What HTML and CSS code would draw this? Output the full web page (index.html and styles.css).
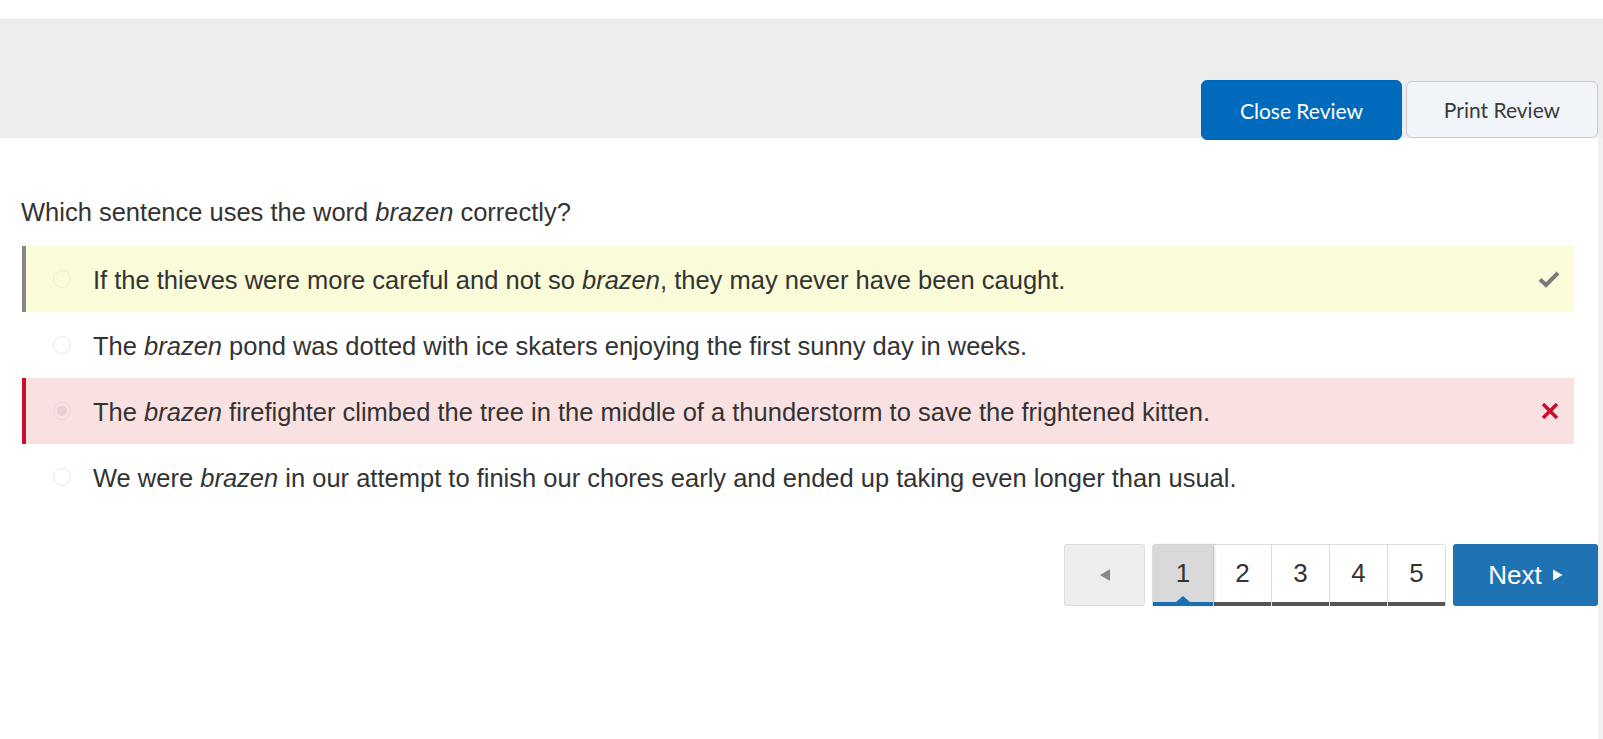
FILE: index.html
```html
<!DOCTYPE html>
<html>
<head>
<meta charset="utf-8">
<link rel="stylesheet" href="styles.css">
</head>
<body>
<div class="topgap"></div>
<header class="review-bar">
  <button class="btn btn-close">Close Review</button>
  <button class="btn btn-print">Print Review</button>
</header>
<main class="content">
  <p class="question">Which sentence uses the word <em>brazen</em> correctly?</p>
  <ul class="answers">
    <li class="answer correct">
      <span class="radio"></span>
      <span class="text">If the thieves were more careful and not so <em>brazen</em>, they may never have been caught.</span>
      <svg class="mark" width="22" height="18" viewBox="0 0 22 18"><path d="M2 9.5 L8 15 L20 3" fill="none" stroke="#7a7a7a" stroke-width="4" stroke-linejoin="miter"/></svg>
    </li>
    <li class="answer">
      <span class="radio"></span>
      <span class="text">The <em>brazen</em> pond was dotted with ice skaters enjoying the first sunny day in weeks.</span>
    </li>
    <li class="answer wrong">
      <span class="radio selected"></span>
      <span class="text">The <em>brazen</em> firefighter climbed the tree in the middle of a thunderstorm to save the frightened kitten.</span>
      <svg class="mark" width="20" height="20" viewBox="0 0 20 20"><path d="M3 3 L17 17 M17 3 L3 17" fill="none" stroke="#c8102e" stroke-width="3.6"/></svg>
    </li>
    <li class="answer">
      <span class="radio"></span>
      <span class="text">We were <em>brazen</em> in our attempt to finish our chores early and ended up taking even longer than usual.</span>
    </li>
  </ul>
  <nav class="pager">
    <button class="prev"><svg width="12" height="14" viewBox="0 0 12 14"><path d="M11 1 L1 7 L11 13 Z" fill="#8a8a8a"/></svg></button>
    <div class="pages">
      <span class="page current">1</span>
      <span class="page">2</span>
      <span class="page">3</span>
      <span class="page">4</span>
      <span class="page">5</span>
    </div>
    <button class="next">Next <svg width="11" height="12" viewBox="0 0 11 12"><path d="M1 0.5 L10.5 6 L1 11.5 Z" fill="#fff"/></svg></button>
  </nav>
</main>
</body>
</html>
```
FILE: styles.css
```css
html, body {
  margin: 0;
  padding: 0;
  background: #ffffff;
}
body {
  font-family: "Liberation Sans", Arial, sans-serif;
  color: #333333;
  width: 1603px;
  height: 739px;
  overflow: hidden;
}
.topgap {
  height: 19px;
}
.review-bar {
  height: 119px;
  background: #ededed;
  border-top: 1px solid #e6e6e6;
  box-sizing: border-box;
  display: flex;
  justify-content: flex-end;
  align-items: flex-end;
  padding-right: 5px;
  gap: 4px;
}
.btn {
  font-family: Lato, "Open Sans", sans-serif;
  font-size: 21px;
  border-radius: 6px;
  cursor: pointer;
}
.btn-close {
  width: 201px;
  height: 60px;
  margin-bottom: -2px;
  background: #006bbd;
  color: #ffffff;
  border: 1px solid #0066b3;
}
.btn-print {
  width: 192px;
  height: 57px;
  background: #f1f4f8;
  color: #3a3a3a;
  border: 1px solid #c5c9ce;
}
.content {
  height: 601px;
  box-sizing: border-box;
  border-right: 5px solid #f0f0f0;
  padding: 59px 24px 0 21px;
  width: 1603px;
}
.question {
  margin: 0;
  font-size: 25.5px;
  line-height: 30px;
}
em {
  font-style: italic;
}
.answers {
  list-style: none;
  margin: 19px 0 0 1px;
  padding: 0;
}
.answer {
  display: flex;
  align-items: center;
  height: 66px;
  border-left: 4px solid transparent;
  padding-left: 27px;
  font-size: 25.5px;
}
.answer.correct {
  background: #fafbd8;
  border-left-color: #868686;
}
.answer.wrong {
  background: #fae1e1;
  border-left-color: #c8102e;
}
.radio {
  width: 18px;
  height: 18px;
  border-radius: 50%;
  border: 1px solid #e6e6e4;
  box-sizing: border-box;
  flex: none;
  display: flex;
  align-items: center;
  justify-content: center;
}
.radio.selected::after {
  content: "";
  width: 10px;
  height: 10px;
  border-radius: 50%;
  background: #e6d2d2;
}
.answer.correct .radio {
  border-color: #eeeed6;
}
.answer.wrong .radio {
  border-color: #f0d2d4;
}
.text {
  margin-left: 22px;
  flex: 1;
  padding-top: 2px;
}
.mark {
  flex: none;
  margin-right: 14px;
}
.pager {
  display: flex;
  justify-content: flex-end;
  align-items: stretch;
  margin-top: 34px;
  height: 62px;
  margin-right: -24px;
}
.prev {
  width: 81px;
  background: #eeeeee;
  border: 1px solid #dddddd;
  border-radius: 3px;
  display: flex;
  align-items: center;
  justify-content: center;
  margin-right: 7px;
}
.pages {
  display: flex;
  border: 1px solid #dddddd;
  border-bottom: none;
  border-radius: 3px 3px 0 0;
  box-shadow: inset 0 -4px 0 #555555;
  margin-right: 7px;
  position: relative;
}
.page {
  width: 58px;
  display: flex;
  align-items: center;
  justify-content: center;
  font-size: 26px;
  color: #333;
  border-left: 1px solid #dddddd;
  padding-bottom: 4px;
  box-sizing: border-box;
  background: #ffffff;
  background-clip: content-box;
}
.page:first-child {
  border-left: none;
}
.page.current {
  width: 60px;
  background: #d9d9d9;
  background-clip: content-box;
  position: relative;
  box-shadow: 2px 0 3px rgba(0,0,0,0.12);
  z-index: 1;
  border-bottom: 4px solid #1a6fb0;
  padding-bottom: 0;
}
.page.current::after {
  content: "";
  position: absolute;
  left: 50%;
  bottom: 0;
  margin-left: -7px;
  border-left: 7px solid transparent;
  border-right: 7px solid transparent;
  border-bottom: 6px solid #1a6fb0;
}
.next {
  width: 145px;
  background: #1f73b2;
  color: #ffffff;
  border: none;
  border-radius: 3px;
  font-family: "Liberation Sans", Arial, sans-serif;
  font-size: 26px;
  display: flex;
  align-items: center;
  justify-content: center;
  gap: 10px;
}
```
